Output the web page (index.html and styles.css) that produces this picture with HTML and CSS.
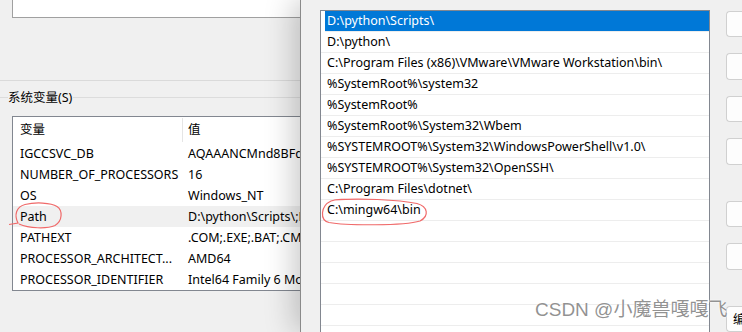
FILE: index.html
```html
<!DOCTYPE html>
<html lang="zh-CN">
<head>
    <meta charset="UTF-8">
    <title>环境变量</title>
    <link rel="stylesheet" href="styles.css">
</head>
<body>
    <div class="screen">
        <div class="env-pane">
            <div class="user-list"></div>
            <div class="sep"></div>
            <div class="group-title">
                <span class="line short"></span>
                <span class="label">系统变量(S)</span>
                <span class="line"></span>
            </div>
            <div class="sys-list">
                <div class="sys-head">
                    <div class="col-name">变量</div>
                    <div class="col-value">值</div>
                </div>
                <div class="sys-row"><div class="col-name">IGCCSVC_DB</div><div class="col-value">AQAAANCMnd8BFdERjHoAwE/Cl+sBAAAA</div></div>
                <div class="sys-row"><div class="col-name">NUMBER_OF_PROCESSORS</div><div class="col-value">16</div></div>
                <div class="sys-row"><div class="col-name">OS</div><div class="col-value">Windows_NT</div></div>
                <div class="sys-row current"><div class="col-name">Path</div><div class="col-value">D:\python\Scripts\;D:\python\;C:\Program Files</div></div>
                <div class="sys-row"><div class="col-name">PATHEXT</div><div class="col-value">.COM;.EXE;.BAT;.CMD;.VBS;.VBE</div></div>
                <div class="sys-row"><div class="col-name">PROCESSOR_ARCHITECT...</div><div class="col-value">AMD64</div></div>
                <div class="sys-row"><div class="col-name">PROCESSOR_IDENTIFIER</div><div class="col-value">Intel64 Family 6 Model 141</div></div>
            </div>
        </div>

        <div class="edit-pane">
            <div class="path-list">
                <div class="path-row selected">D:\python\Scripts\</div>
                <div class="path-row">D:\python\</div>
                <div class="path-row">C:\Program Files (x86)\VMware\VMware Workstation\bin\</div>
                <div class="path-row">%SystemRoot%\system32</div>
                <div class="path-row">%SystemRoot%</div>
                <div class="path-row">%SystemRoot%\System32\Wbem</div>
                <div class="path-row">%SYSTEMROOT%\System32\WindowsPowerShell\v1.0\</div>
                <div class="path-row">%SYSTEMROOT%\System32\OpenSSH\</div>
                <div class="path-row">C:\Program Files\dotnet\</div>
                <div class="path-row">C:\mingw64\bin</div>
                <div class="path-row"></div>
                <div class="path-row"></div>
                <div class="path-row"></div>
                <div class="path-row"></div>
                <div class="path-row"></div>
                <div class="path-row"></div>
            </div>
            <div class="buttons">
                <div class="btn"></div>
                <div class="btn"></div>
                <div class="btn"></div>
                <div class="btn"></div>
                <div class="btn spaced"></div>
                <div class="btn"></div>
                <div class="btn spaced">编</div>
            </div>
        </div>

        <svg class="marks" width="742" height="332" viewBox="0 0 742 332">
            <path d="M9 224.5 L18 223 C14 215 16 207 25 204.5 C35 202 51 202.5 57 206.5 C63 210.5 62.5 221 55 225.5 C47 229 29 228.5 19 224" />
            <path d="M334 200 C358 198 398 199.5 417 203.5 C428 206.5 429.5 216 420 221 C404 226 346 225.5 329 222.5 C319.5 220 320.5 206 331 201 C336 199 341 199 346 199.5" />
        </svg>

        <div class="watermark">CSDN @小魔兽嘎嘎飞</div>
    </div>
</body>
</html>
```

FILE: styles.css
```css
body {
    margin: 0;
    font-family: "Noto Sans", "Noto Sans CJK SC", sans-serif;
    font-size: 12.5px;
    color: #000;
    background: #f0f0f0;
}
.screen {
    position: relative;
    width: 742px;
    height: 332px;
    overflow: hidden;
    display: flex;
}

/* left window: environment variables */
.env-pane {
    width: 300px;
    flex-shrink: 0;
    overflow: hidden;
    display: flex;
    flex-direction: column;
}
.user-list {
    margin-left: 12px;
    width: 400px;
    height: 17px;
    background: #fff;
    border-left: 1px solid #a0a0a0;
    border-bottom: 1px solid #a0a0a0;
    flex-shrink: 0;
}
.sep {
    margin-top: 62px;
    height: 1px;
    background: #dadada;
    flex-shrink: 0;
}
.group-title {
    margin-top: 8px;
    height: 17px;
    display: flex;
    align-items: center;
}
.group-title .line {
    flex: 1;
    height: 1px;
    background: #dcdcdc;
}
.group-title .line.short {
    flex: 0 0 8px;
}
.group-title .label {
    padding-right: 1px;
    line-height: 17px;
}
.sys-list {
    margin-top: 10px;
    margin-left: 12px;
    width: 300px;
    background: #fff;
    border: 1px solid #828790;
    border-right: none;
    flex-shrink: 0;
}
.sys-head,
.sys-row {
    display: flex;
    white-space: nowrap;
}
.sys-head {
    height: 26px;
    line-height: 26px;
}
.sys-row {
    height: 21px;
    line-height: 21px;
}
.sys-row.current {
    background: #f0f0f0;
}
.col-name {
    flex: 0 0 162px;
    padding-left: 7px;
    overflow: hidden;
}
.col-value {
    flex: 1;
    min-width: 0;
    padding-left: 6px;
    overflow: hidden;
}
.sys-head .col-value {
    border-left: 1px solid #e5e5e5;
    margin: 1px 0;
    line-height: 24px;
    padding-left: 5px;
}

/* right window: edit path */
.edit-pane {
    position: relative;
    flex: 1;
    display: flex;
    gap: 16px;
    padding-left: 19px;
    border-left: 1px solid #8a8a8a;
    background: #f0f0f0;
    box-shadow: -6px 0 28px rgba(0, 0, 0, 0.22);
}
.path-list {
    margin-top: 10px;
    width: 390px;
    height: 340px;
    flex-shrink: 0;
    box-sizing: border-box;
    background: #fff;
    border: 1px solid #828790;
}
.path-row {
    height: 20px;
    line-height: 20px;
    padding-left: 6px;
    border-bottom: 1px solid #ededed;
    white-space: nowrap;
}
.path-row.selected {
    margin-left: 4px;
    padding-left: 2px;
    background: #0078d7;
    color: #fff;
}
.buttons {
    margin-top: 11px;
    display: flex;
    flex-direction: column;
    gap: 16px;
}
.btn {
    width: 16px;
    height: 27px;
    box-sizing: border-box;
    line-height: 25px;
    padding-left: 6px;
    background: #fdfdfd;
    border: 1px solid #d0d0d0;
    border-right: none;
    border-radius: 4px 0 0 4px;
    overflow: hidden;
    white-space: nowrap;
}
.btn.spaced {
    margin-top: 20px;
}

/* overlays */
.marks {
    position: absolute;
    left: 0;
    top: 0;
    pointer-events: none;
}
.marks path {
    fill: none;
    stroke: #f06a6a;
    stroke-width: 1.2;
}
.watermark {
    position: absolute;
    left: 535px;
    top: 297px;
    font-family: "Liberation Sans", "Noto Sans CJK SC", sans-serif;
    font-size: 19px;
    line-height: 26px;
    color: rgba(110, 110, 110, 0.75);
    text-shadow: 0 0 1px #fff, 0 0 2px #fff;
    white-space: nowrap;
}
```
